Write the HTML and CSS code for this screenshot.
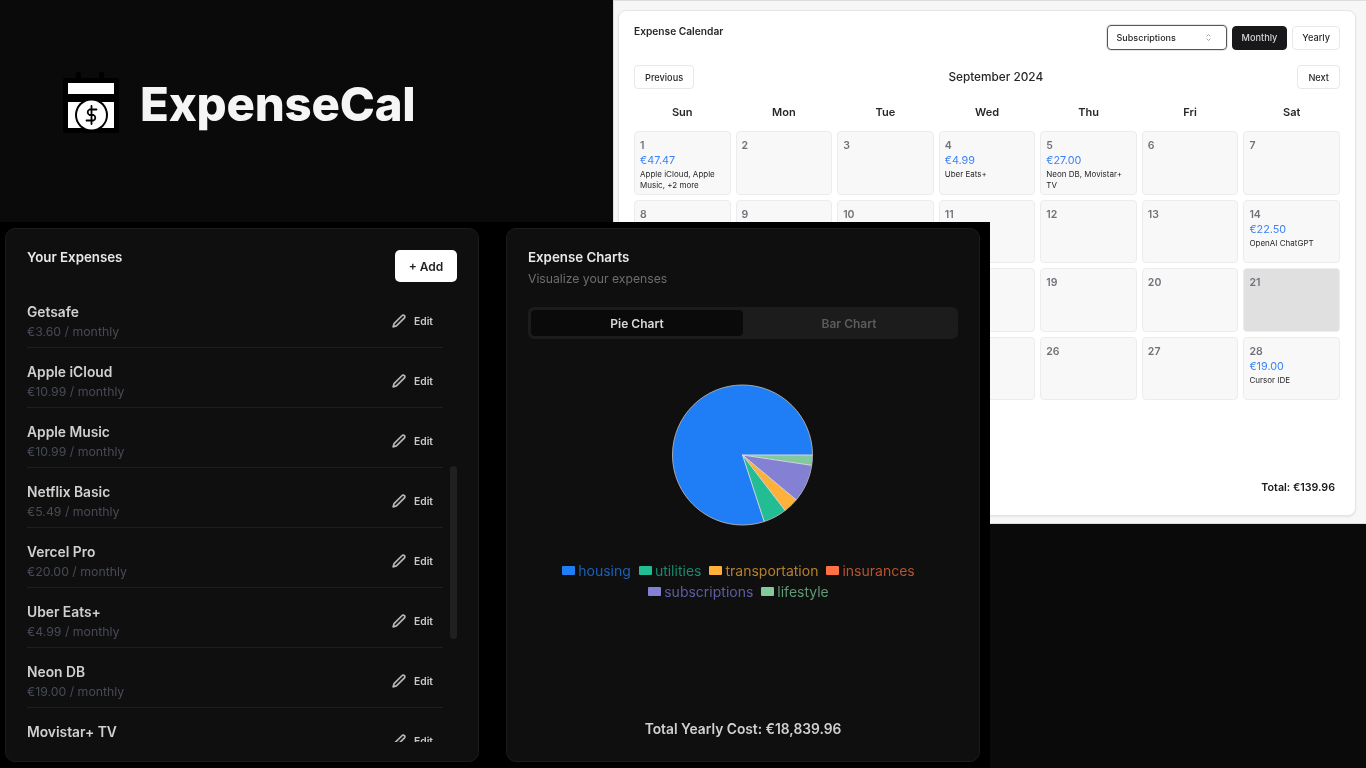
FILE: index.html
```html
<!DOCTYPE html>
<html lang="en">
<head>
<meta charset="utf-8">
<title>ExpenseCal</title>
<link rel="stylesheet" href="styles.css">
</head>
<body>
<main class="stage">
  <div class="brand">
    <svg class="brand-icon" viewBox="0 0 56 62" aria-hidden="true">
      <rect x="0" y="6" width="56" height="55" rx="2" fill="#000"/>
      <rect x="13" y="0" width="5" height="10" rx="2" fill="#000"/>
      <rect x="36" y="0" width="5" height="10" rx="2" fill="#000"/>
      <rect x="5" y="11" width="46" height="11" fill="#fff"/>
      <rect x="5" y="30" width="46" height="26" fill="#fff"/>
      <circle cx="28.5" cy="43" r="16.5" fill="#000"/>
      <circle cx="28.5" cy="43" r="14.5" fill="#fff"/>
      <g fill="none" stroke="#000" stroke-width="1.8" stroke-linecap="round" transform="translate(16.5 31)">
        <path d="M12 3v18"/>
        <path d="M17 6.5H10a3 3 0 0 0 0 5.5h4a3 3 0 0 1 0 5.5H7"/>
      </g>
    </svg>
    <span class="brand-name">ExpenseCal</span>
  </div>

  <section class="window window-light">
    <div class="cal-card">
      <header class="cal-head">
        <h2 class="cal-title">Expense Calendar</h2>
        <div class="cal-controls">
          <div class="select">
            <span>Subscriptions</span>
            <svg class="select-icon" viewBox="0 0 24 24" aria-hidden="true"><path d="m7 15 5 5 5-5"/><path d="m7 9 5-5 5 5"/></svg>
          </div>
          <button class="btn btn-toggle btn-dark">Monthly</button>
          <button class="btn btn-toggle">Yearly</button>
        </div>
      </header>
      <div class="cal-nav">
        <button class="btn">Previous</button>
        <span class="cal-month">September 2024</span>
        <button class="btn">Next</button>
      </div>
      <div class="cal-grid">
        <div class="dow">Sun</div><div class="dow">Mon</div><div class="dow">Tue</div><div class="dow">Wed</div><div class="dow">Thu</div><div class="dow">Fri</div><div class="dow">Sat</div>
        <div class="day"><span class="num">1</span><span class="amt">€47.47</span><span class="desc">Apple iCloud, Apple Music, +2 more</span></div>
        <div class="day"><span class="num">2</span></div>
        <div class="day"><span class="num">3</span></div>
        <div class="day"><span class="num">4</span><span class="amt">€4.99</span><span class="desc">Uber Eats+</span></div>
        <div class="day"><span class="num">5</span><span class="amt">€27.00</span><span class="desc">Neon DB, Movistar+ TV</span></div>
        <div class="day"><span class="num">6</span></div>
        <div class="day"><span class="num">7</span></div>
        <div class="day"><span class="num">8</span></div>
        <div class="day"><span class="num">9</span></div>
        <div class="day"><span class="num">10</span></div>
        <div class="day"><span class="num">11</span></div>
        <div class="day"><span class="num">12</span></div>
        <div class="day"><span class="num">13</span></div>
        <div class="day"><span class="num">14</span><span class="amt">€22.50</span><span class="desc">OpenAI ChatGPT</span></div>
        <div class="day"><span class="num">15</span></div>
        <div class="day"><span class="num">16</span></div>
        <div class="day"><span class="num">17</span></div>
        <div class="day"><span class="num">18</span></div>
        <div class="day"><span class="num">19</span></div>
        <div class="day"><span class="num">20</span></div>
        <div class="day day-today"><span class="num">21</span></div>
        <div class="day"><span class="num">22</span></div>
        <div class="day"><span class="num">23</span></div>
        <div class="day"><span class="num">24</span></div>
        <div class="day"><span class="num">25</span></div>
        <div class="day"><span class="num">26</span></div>
        <div class="day"><span class="num">27</span></div>
        <div class="day"><span class="num">28</span><span class="amt">€19.00</span><span class="desc">Cursor IDE</span></div>
      </div>
      <div class="cal-total">Total: €139.96</div>
    </div>
  </section>

  <section class="window window-dark">
    <div class="panel">
      <header class="exp-head">
        <h2 class="panel-title">Your Expenses</h2>
        <button class="btn-add">+ Add</button>
      </header>
      <ul class="exp-list">
        <li class="exp-row"><div><div class="exp-name">Getsafe</div><div class="exp-sub">€3.60 / monthly</div></div><div class="edit"><svg class="pencil" viewBox="0 0 24 24" aria-hidden="true"><path d="M17 3a2.85 2.83 0 1 1 4 4L7.5 20.5 2 22l1.5-5.5Z"/></svg><span>Edit</span></div></li>
        <li class="exp-row"><div><div class="exp-name">Apple iCloud</div><div class="exp-sub">€10.99 / monthly</div></div><div class="edit"><svg class="pencil" viewBox="0 0 24 24" aria-hidden="true"><path d="M17 3a2.85 2.83 0 1 1 4 4L7.5 20.5 2 22l1.5-5.5Z"/></svg><span>Edit</span></div></li>
        <li class="exp-row"><div><div class="exp-name">Apple Music</div><div class="exp-sub">€10.99 / monthly</div></div><div class="edit"><svg class="pencil" viewBox="0 0 24 24" aria-hidden="true"><path d="M17 3a2.85 2.83 0 1 1 4 4L7.5 20.5 2 22l1.5-5.5Z"/></svg><span>Edit</span></div></li>
        <li class="exp-row"><div><div class="exp-name">Netflix Basic</div><div class="exp-sub">€5.49 / monthly</div></div><div class="edit"><svg class="pencil" viewBox="0 0 24 24" aria-hidden="true"><path d="M17 3a2.85 2.83 0 1 1 4 4L7.5 20.5 2 22l1.5-5.5Z"/></svg><span>Edit</span></div></li>
        <li class="exp-row"><div><div class="exp-name">Vercel Pro</div><div class="exp-sub">€20.00 / monthly</div></div><div class="edit"><svg class="pencil" viewBox="0 0 24 24" aria-hidden="true"><path d="M17 3a2.85 2.83 0 1 1 4 4L7.5 20.5 2 22l1.5-5.5Z"/></svg><span>Edit</span></div></li>
        <li class="exp-row"><div><div class="exp-name">Uber Eats+</div><div class="exp-sub">€4.99 / monthly</div></div><div class="edit"><svg class="pencil" viewBox="0 0 24 24" aria-hidden="true"><path d="M17 3a2.85 2.83 0 1 1 4 4L7.5 20.5 2 22l1.5-5.5Z"/></svg><span>Edit</span></div></li>
        <li class="exp-row"><div><div class="exp-name">Neon DB</div><div class="exp-sub">€19.00 / monthly</div></div><div class="edit"><svg class="pencil" viewBox="0 0 24 24" aria-hidden="true"><path d="M17 3a2.85 2.83 0 1 1 4 4L7.5 20.5 2 22l1.5-5.5Z"/></svg><span>Edit</span></div></li>
        <li class="exp-row"><div><div class="exp-name">Movistar+ TV</div><div class="exp-sub">€8.00 / monthly</div></div><div class="edit"><svg class="pencil" viewBox="0 0 24 24" aria-hidden="true"><path d="M17 3a2.85 2.83 0 1 1 4 4L7.5 20.5 2 22l1.5-5.5Z"/></svg><span>Edit</span></div></li>
      </ul>
      <div class="scroll-thumb"></div>
    </div>

    <div class="panel panel-chart">
      <h2 class="panel-title">Expense Charts</h2>
      <p class="panel-sub">Visualize your expenses</p>
      <div class="tabs">
        <div class="tab tab-active">Pie Chart</div>
        <div class="tab">Bar Chart</div>
      </div>
      <svg class="pie" viewBox="-71 -71 142 142" aria-hidden="true">
        <circle r="70" fill="#1f7df5"/>
        <path d="M0 0L70 0A70 70 0 0 1 69.2 10.3Z" fill="#82c99d"/>
        <path d="M0 0L69.2 10.3A70 70 0 0 1 53.7 44.9Z" fill="#8480d4"/>
        <path d="M0 0L53.7 44.9A70 70 0 0 1 42.6 55.5Z" fill="#ffb03b"/>
        <path d="M0 0L42.6 55.5A70 70 0 0 1 21.7 66.6Z" fill="#22bd93"/>
        <g fill="none" stroke="#d6d6d6" stroke-width="1">
          <circle r="70" stroke="#a8a8a8"/>
          <path d="M70 0L0 0L21.7 66.6M0 0L69.2 10.3M0 0L53.7 44.9M0 0L42.6 55.5"/>
        </g>
      </svg>
      <div class="legend">
        <span class="leg leg-housing"><i></i>housing</span>
        <span class="leg leg-utilities"><i></i>utilities</span>
        <span class="leg leg-transport"><i></i>transportation</span>
        <span class="leg leg-insurance"><i></i>insurances</span>
        <span class="leg leg-subs"><i></i>subscriptions</span>
        <span class="leg leg-life"><i></i>lifestyle</span>
      </div>
      <div class="yearly">Total Yearly Cost: €18,839.96</div>
    </div>
  </section>
</main>
</body>
</html>
```
FILE: styles.css
```css
* { box-sizing: border-box; }
html, body { margin: 0; padding: 0; }
body { background: #0a0a0a; font-family: Inter, "Liberation Sans", sans-serif; overflow: hidden; }
h2, p, ul { margin: 0; padding: 0; }
button { font-family: inherit; cursor: pointer; }

.stage { position: relative; width: 1366px; height: 768px; overflow: hidden; background: #0a0a0a; filter: blur(0.6px); }

.brand { position: absolute; left: 63px; top: 72px; display: flex; align-items: flex-start; gap: 21px; }
.brand-icon { width: 56px; height: 62px; flex: none; }
.brand-name { font-size: 47.3px; font-weight: 800; line-height: 58px; letter-spacing: -0.2px; color: #f5f5f5; margin-top: 3px; }

.window { position: absolute; }
.window-light { left: 613px; top: 0; width: 753px; height: 524px; background: #f7f7f7; border-left: 1px solid #ddd; border-top: 1px solid #ddd; border-bottom: 1px solid #ddd; padding: 9px 10px 7px 4px; }
.window-dark { left: 0; top: 222px; width: 990px; height: 546px; background: #000; padding: 6px 10px 6px 5px; display: flex; gap: 27px; }

.cal-card { height: 100%; background: #fff; border: 1px solid #e6e6e6; border-radius: 8px; box-shadow: 0 1px 2px rgba(0,0,0,.08); padding: 14px 15px 20px; display: flex; flex-direction: column; color: #18181b; }
.cal-head { display: flex; justify-content: space-between; align-items: flex-start; }
.cal-title { font-size: 10.2px; font-weight: 600; line-height: 14px; margin-top: -1px; color: #27272a; }
.cal-controls { display: flex; gap: 5px; align-items: center; }
.select { width: 120px; height: 25px; border: 1px solid #555; border-radius: 4px; padding: 0 9px; display: flex; align-items: center; justify-content: space-between; font-size: 9px; font-weight: 500; color: #27272a; box-shadow: 0 0 0 1px #e4e4e4; }
.select-icon { width: 9px; height: 9px; fill: none; stroke: #8a8a8a; stroke-width: 2; margin-right: 4px; }
.btn { height: 24px; padding: 0 10px; background: #fff; border: 1px solid #e8e8e8; border-radius: 4px; font-size: 9.2px; font-weight: 500; color: #27272a; }
.btn-toggle { padding: 0 9px; }
.btn-dark { background: #18181b; border-color: #18181b; color: #d4d4d8; }

.cal-nav { display: flex; justify-content: space-between; align-items: center; margin-top: 15px; }
.cal-month { font-size: 11.8px; font-weight: 500; color: #27272a; }

.cal-grid { display: grid; grid-template-columns: repeat(7, 1fr); grid-auto-rows: 63.5px; grid-template-rows: 37px; gap: 5px; }
.dow { font-size: 11px; font-weight: 600; color: #27272a; display: flex; justify-content: center; align-items: center; padding-top: 9px; }
.day { background: #f8f8f8; border: 1px solid #ececec; border-radius: 4px; padding: 7px 5px; display: flex; flex-direction: column; }
.day-today { background: #e0e0e0; }
.num { font-size: 10.5px; font-weight: 600; line-height: 13px; color: #71717a; }
.amt { font-size: 10.8px; line-height: 15px; margin-top: 1px; color: #3b82f6; }
.desc { font-size: 8px; line-height: 10.5px; margin-top: 1px; color: #27272a; }
.cal-total { margin-top: auto; align-self: flex-end; padding-right: 5px; font-size: 10.7px; font-weight: 600; line-height: 14px; color: #18181b; }

.panel { position: relative; width: 474px; height: 534px; background: #0f0f0f; border: 1px solid #1c1c1c; border-radius: 10px; padding: 21px; color: #e8e8e8; }
.panel-title { font-size: 13.3px; font-weight: 600; line-height: 15px; color: #e8e8e8; }
.panel-sub { font-size: 12.2px; line-height: 16px; margin-top: 6px; color: #6d6d6d; }

.exp-head { display: flex; justify-content: space-between; align-items: flex-start; height: 38px; }
.btn-add { width: 62px; height: 32px; background: #fff; border: 0; border-radius: 5px; font-size: 12px; font-weight: 600; color: #222; }
.exp-list { list-style: none; width: 416px; height: 454px; overflow: hidden; }
.exp-row { height: 60px; border-bottom: 1px solid #1f1f1f; display: flex; justify-content: space-between; align-items: center; padding: 8px 10px 0 0; }
.exp-name { font-size: 13.8px; font-weight: 600; line-height: 18px; color: #d0d0d0; }
.exp-sub { font-size: 12.3px; line-height: 18px; margin-top: 2px; color: #474b56; }
.edit { display: flex; align-items: center; gap: 8px; font-size: 10.3px; font-weight: 600; color: #c8c8c8; margin-top: -1px; }
.pencil { width: 14px; height: 14px; fill: none; stroke: #b5b5b5; stroke-width: 3; stroke-linejoin: round; }
.scroll-thumb { position: absolute; left: 444px; top: 237px; width: 7px; height: 173px; background: #202020; border-radius: 4px; }

.panel-chart { display: flex; flex-direction: column; }
.tabs { display: flex; height: 32px; margin-top: 20px; padding: 3px; background: #1c1c1c; border-radius: 6px; }
.tab { flex: 1; display: flex; align-items: center; justify-content: center; font-size: 12px; font-weight: 600; color: #5c5c5c; border-radius: 4px; }
.tab-active { background: #0a0a0a; color: #d8d8d8; }
.pie { width: 142px; height: 142px; align-self: center; margin-top: 45px; transform: translateX(-0.5px); }
.legend { display: flex; flex-wrap: wrap; justify-content: center; column-gap: 8px; row-gap: 4px; margin-top: 36px; padding-right: 9px; font-size: 14px; line-height: 17px; }
.leg { display: inline-flex; align-items: center; gap: 3px; }
.leg i { display: block; width: 13px; height: 9px; border-radius: 1px; }
.leg-housing { color: #1a60bb; } .leg-housing i { background: #1f7df5; }
.leg-utilities { color: #188a6c; } .leg-utilities i { background: #22bd93; }
.leg-transport { color: #b5802e; } .leg-transport i { background: #ffb03b; }
.leg-insurance { color: #b5542f; } .leg-insurance i { background: #ff7043; }
.leg-subs { color: #5f5ca0; } .leg-subs i { background: #8480d4; }
.leg-life { color: #5f9a76; } .leg-life i { background: #82c99d; }
.yearly { margin-top: auto; align-self: center; font-size: 13.8px; font-weight: 600; line-height: 18px; color: #d0d0d0; padding-bottom: 2px; }
```
